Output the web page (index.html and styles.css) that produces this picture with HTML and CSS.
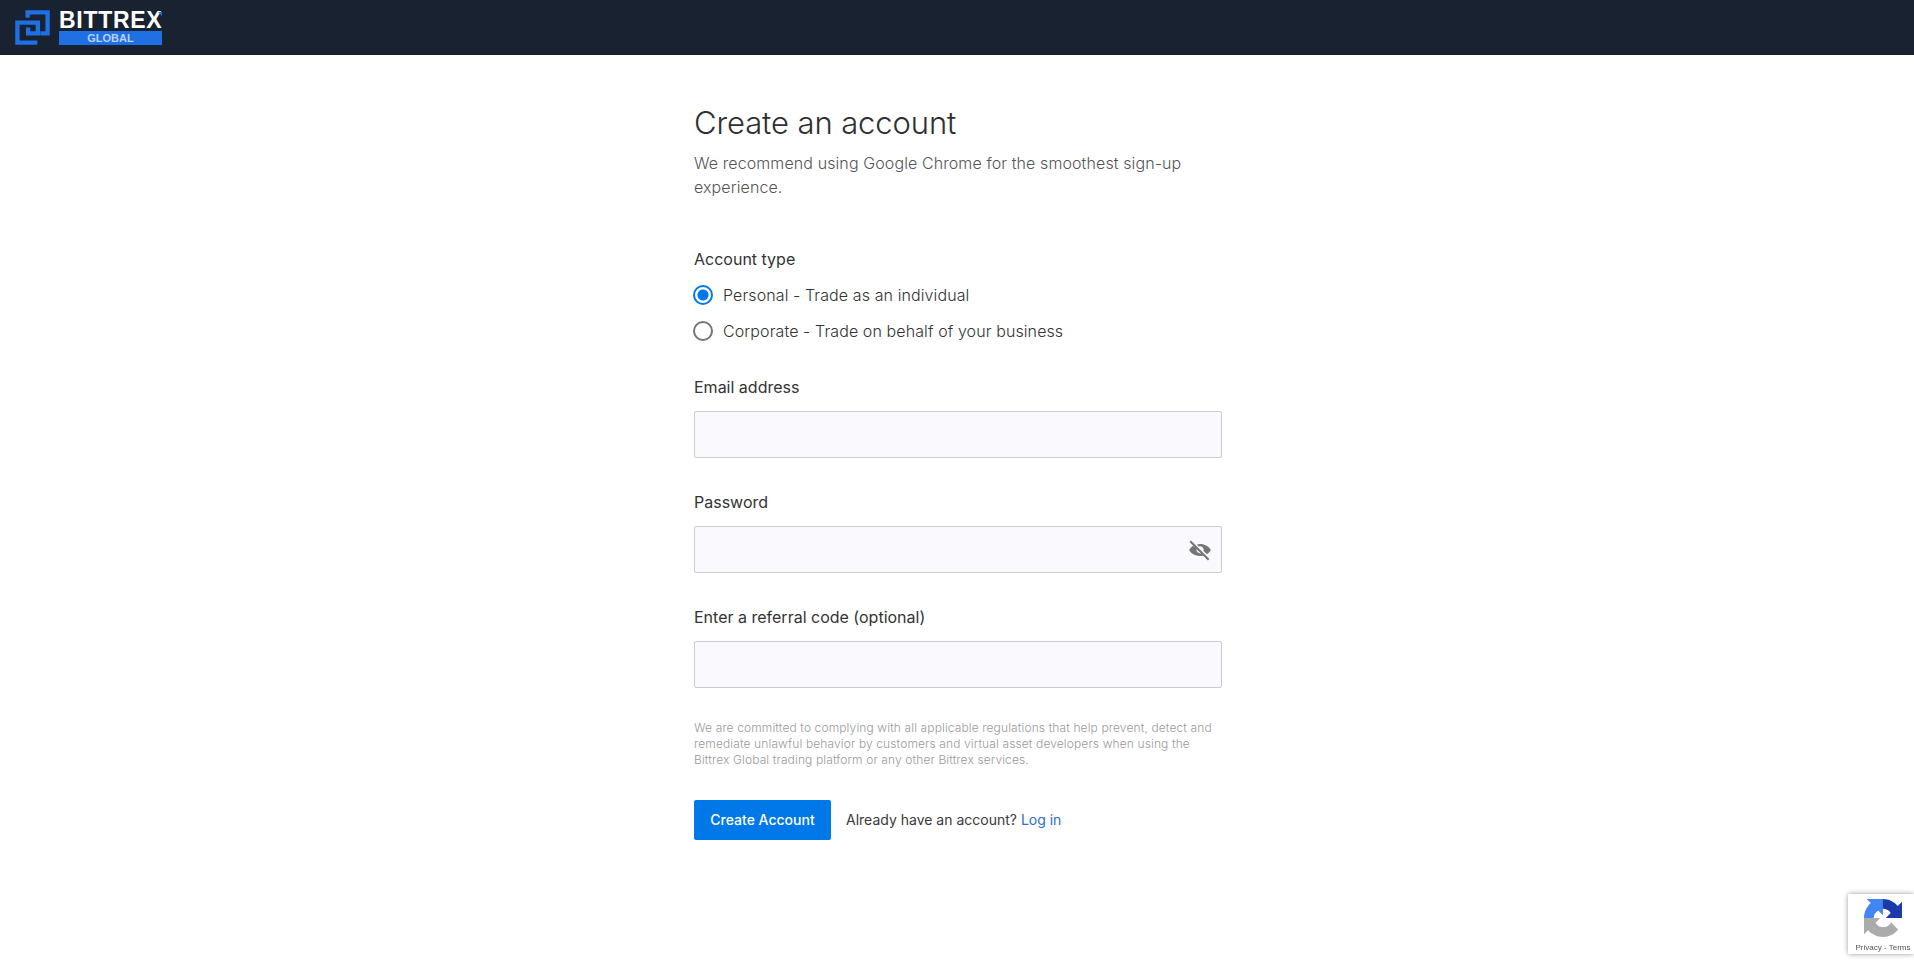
FILE: index.html
```html
<!DOCTYPE html>
<html lang="en">
<head>
    <meta charset="UTF-8">
    <meta name="viewport" content="width=device-width, initial-scale=1.0">
    <title>Create an account</title>
    <link rel="stylesheet" href="styles.css">
</head>
<body>

    <!-- Top bar with logo -->
    <header class="topbar">
        <a class="logo" href="#">
            <svg class="logo-mark" width="35" height="35" viewBox="0 0 36 36" fill="none" stroke="#1f6fe5" stroke-width="4.500">
                <path d="M13 8V2.500H33.500V24H26"/>
                <path d="M23 33.500H2.500V13H23.500V24H13.500V18"/>
            </svg>
            <span class="logo-text">
                <span class="logo-name">BITTREX</span>
                <span class="logo-global">GLOBAL</span>
            </span>
        </a>
    </header>

    <!-- Sign up form -->
    <main class="signup">
        <h1>Create an account</h1>
        <p class="intro">We recommend using Google Chrome for the smoothest sign-up experience.</p>

        <form>
            <div class="field field-radio">
                <span class="label">Account type</span>
                <label class="radio">
                    <input type="radio" name="tipo" checked>
                    <span>Personal - Trade as an individual</span>
                </label>
                <label class="radio">
                    <input type="radio" name="tipo">
                    <span>Corporate - Trade on behalf of your business</span>
                </label>
            </div>

            <div class="field">
                <label class="label" for="email">Email address</label>
                <input class="text-input" type="email" id="email">
            </div>

            <div class="field">
                <label class="label" for="password">Password</label>
                <div class="password-box">
                    <input class="text-input" type="password" id="password">
                    <svg class="eye" width="26" height="26" viewBox="0 0 24 24" fill="#757575">
                        <path d="M12 6.500c-1 0-2 .2-2.900.5l1.700 1.700A3.500 3.500 0 0 1 15.300 13l3 3c1.700-1.100 3-2.600 3.700-4-1.700-3.300-5.500-5.500-10-5.500z"/>
                        <path d="M5.600 8.100C4 9.100 2.800 10.500 2 12c1.700 3.300 5.500 5.500 10 5.500 1.200 0 2.300-.2 3.400-.5l-2-2A3.500 3.500 0 0 1 9 10.600z"/>
                        <path d="M3.700 3.300 20.700 20.300l-1.400 1.400L2.300 4.700z"/>
                    </svg>
                </div>
            </div>

            <div class="field">
                <label class="label" for="referral">Enter a referral code (optional)</label>
                <input class="text-input" type="text" id="referral">
            </div>

            <p class="legal">We are committed to complying with all applicable regulations that help prevent, detect and remediate unlawful behavior by customers and virtual asset developers when using the Bittrex Global trading platform or any other Bittrex services.</p>

            <div class="actions">
                <button type="submit">Create Account</button>
                <span class="login">Already have an account? <a href="#">Log in</a></span>
            </div>
        </form>
    </main>

    <!-- reCAPTCHA badge -->
    <div class="recaptcha">
        <svg width="38" height="38" viewBox="0 0 64 64">
            <path d="M64 31.955l-.033-1.370V4.687l-7.160 7.160C50.948 4.674 42.033.093 32.050.093c-10.400 0-19.622 4.960-25.458 12.640l11.736 11.860a15.550 15.550 0 0 1 4.754-5.334c2.050-1.600 4.952-2.906 8.968-2.906.485 0 .860.057 1.135.163 4.976.393 9.288 3.140 11.828 7.124l-8.307 8.307 26.300.001" fill="#1c3aa9"/>
            <path d="M31.862.094l-1.370.033H4.594l7.160 7.160C4.580 13.147 0 22.060 0 32.046c0 10.400 4.960 19.622 12.640 25.458l11.860-11.736a15.550 15.550 0 0 1-5.334-4.754c-1.600-2.050-2.906-4.952-2.906-8.968 0-.485.057-.860.163-1.135.393-4.976 3.140-9.288 7.124-11.828l8.307 8.307.001-26.300" fill="#4285f4"/>
            <path d="M.001 32.045l.033 1.370v25.898l7.160-7.160c5.860 7.173 14.774 11.754 24.760 11.754 10.400 0 19.622-4.960 25.458-12.640l-11.736-11.860a15.550 15.550 0 0 1-4.754 5.334c-2.050 1.600-4.952 2.906-8.968 2.906-.485 0-.860-.057-1.135-.163-4.976-.393-9.288-3.140-11.828-7.124l8.307-8.307-26.300-.001" fill="#ababab"/>
        </svg>
        <span class="recaptcha-links">Privacy - Terms</span>
    </div>

</body>
</html>
```

FILE: styles.css
```css
body { margin: 0; background-color: #fff; font-family: Inter, "Liberation Sans", sans-serif; color: #2b2b2b; }
.topbar { height: 55px; background-color: #182230; display: flex; align-items: center; padding-left: 15px; }
.logo { display: flex; align-items: center; gap: 9px; text-decoration: none; }
.logo-text { display: flex; flex-direction: column; width: 103px; }
.logo-name { position: relative; color: #fff; font-family: "Liberation Sans", sans-serif; font-weight: 700; font-size: 23px; line-height: 20px; letter-spacing: 0.7px; }
.logo-name::after { content: ""; position: absolute; top: 2px; right: 0; border-top: 4px solid #1f6fe5; border-left: 4px solid transparent; }
.logo-global { background-color: #1f6fe5; color: #b9d3f8; font-family: "Liberation Sans", sans-serif; font-weight: 700; font-size: 11px; line-height: 14px; text-align: center; margin-top: 1px; }

.signup { width: 528px; margin: 0 auto; padding: 46px 0 0 2px; }
h1 { margin: 0; font-size: 31px; line-height: 44px; font-weight: 300; letter-spacing: -0.1px; color: #2f2f2f; }
.intro { margin: 6px 0 0; font-size: 16px; line-height: 24px; font-weight: 300; color: #555; letter-spacing: 0.1px; }

.field { margin-top: 32px; }
.field-radio { margin-top: 48px; }
.field-radio + .field { margin-top: 26px; }
.label { display: block; font-size: 16px; line-height: 24px; color: #333; margin-bottom: 12px; }
.field-radio .label { margin-bottom: 6px; }
.radio { display: flex; align-items: center; gap: 10px; height: 36px; font-size: 16px; font-weight: 300; color: #333; letter-spacing: 0.1px; }
.radio input { appearance: none; width: 20px; height: 20px; margin: 0 0 0 -1px; border: 2px solid #757575; border-radius: 50%; }
.radio input:checked { border-color: #0078e7; background: radial-gradient(circle, #0078e7 0 5px, #fff 6px); }

.text-input { display: block; box-sizing: border-box; width: 100%; height: 47px; background-color: #fafafe; border: 1px solid #cbcbcb; border-radius: 2px; padding: 0 12px; }
.password-box { position: relative; }
.eye { position: absolute; top: 11px; right: 9px; }

.legal { margin: 32px 0 0; font-size: 12px; line-height: 16px; font-weight: 300; color: #9a9a9a; letter-spacing: 0.12px; }
.actions { display: flex; align-items: center; gap: 15px; margin-top: 32px; }
button { width: 137px; height: 40px; padding: 0 0 2px; background-color: #0078e7; color: #fff; border: none; border-radius: 2px; font-family: inherit; font-size: 14px; font-weight: 500; cursor: pointer; }
.login { font-size: 14px; color: #3a3a3a; margin-top: -1px; }
.login a { color: #2a6fc9; text-decoration: none; }

.recaptcha { position: fixed; right: 0; top: 894px; width: 66px; height: 60px; background-color: #fff; box-shadow: 0 0 5px rgba(0, 0, 0, 0.4); display: flex; flex-direction: column; align-items: center; justify-content: flex-end; }
.recaptcha svg { position: absolute; top: 5px; left: 16px; }
.recaptcha-links { font-family: "Liberation Sans", sans-serif; font-size: 8px; line-height: 12px; color: #555; margin-left: 4px; }
```
